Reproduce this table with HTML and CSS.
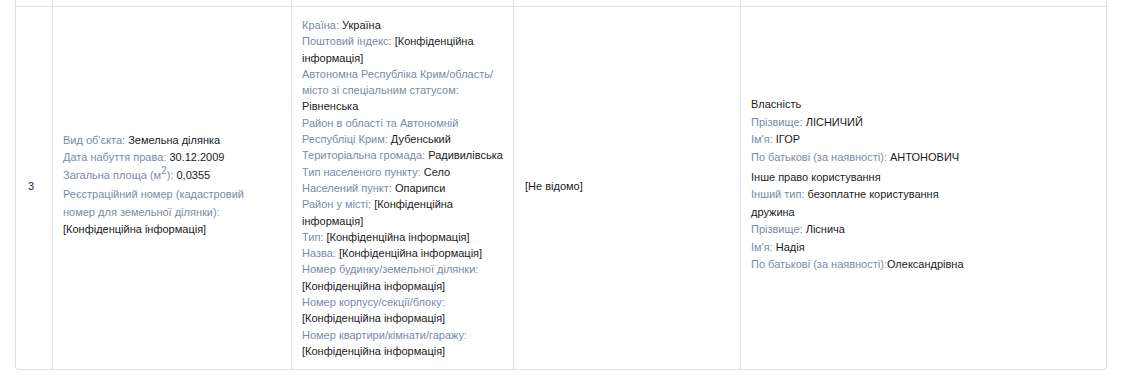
FILE: index.html
```html
<!DOCTYPE html>
<html lang="uk">
<head>
<meta charset="utf-8">
<title>Земельна ділянка</title>
<link rel="stylesheet" href="styles.css">
</head>
<body>
<div class="table">
  <div class="cell top"></div>
  <div class="cell top"></div>
  <div class="cell top"></div>
  <div class="cell top"></div>
  <div class="cell top"></div>

  <div class="cell num">3</div>
  <div class="cell c2">
    <div><span class="lbl">Вид об'єкта:</span> Земельна ділянка</div>
    <div><span class="lbl">Дата набуття права:</span> 30.12.2009</div>
    <div><span class="lbl">Загальна площа (м<sup>2</sup>):</span> 0,0355</div>
    <div class="gap"><span class="lbl">Реєстраційний номер (кадастровий номер для земельної ділянки):</span> [Конфіденційна інформація]</div>
  </div>
  <div class="cell c3">
    <div><span class="lbl">Країна:</span> Україна</div>
    <div><span class="lbl">Поштовий індекс:</span> [Конфіденційна інформація]</div>
    <div><span class="lbl">Автономна Республіка Крим/область/<wbr>місто зі спеціальним статусом:</span> Рівненська</div>
    <div><span class="lbl">Район в області та Автономній Республіці Крим:</span> Дубенський</div>
    <div><span class="lbl">Територіальна громада:</span> Радивилівська</div>
    <div><span class="lbl">Тип населеного пункту:</span> Село</div>
    <div><span class="lbl">Населений пункт:</span> Опарипси</div>
    <div><span class="lbl">Район у місті:</span> [Конфіденційна інформація]</div>
    <div><span class="lbl">Тип:</span> [Конфіденційна інформація]</div>
    <div><span class="lbl">Назва:</span> [Конфіденційна інформація]</div>
    <div><span class="lbl">Номер будинку/земельної ділянки:</span> [Конфіденційна інформація]</div>
    <div><span class="lbl">Номер корпусу/секції/блоку:</span> [Конфіденційна інформація]</div>
    <div><span class="lbl">Номер квартири/кімнати/гаражу:</span> [Конфіденційна інформація]</div>
  </div>
  <div class="cell c4">[Не відомо]</div>
  <div class="cell c5">
    <div class="group">
      <div>Власність</div>
      <div><span class="lbl">Прізвище:</span> ЛІСНИЧИЙ</div>
      <div><span class="lbl">Ім'я:</span> ІГОР</div>
      <div><span class="lbl">По батькові (за наявності):</span> АНТОНОВИЧ</div>
    </div>
    <div class="group next">
      <div>Інше право користування</div>
      <div><span class="lbl">Інший тип:</span> безоплатне користування<br>дружина</div>
      <div><span class="lbl">Прізвище:</span> Ліснича</div>
      <div><span class="lbl">Ім'я:</span> Надія</div>
      <div><span class="lbl">По батькові (за наявності):</span>Олександрівна</div>
    </div>
  </div>
</div>
</body>
</html>
```

FILE: styles.css
```css
html, body {
  margin: 0;
  padding: 0;
  background: #ffffff;
}

body {
  font-family: "Liberation Sans", Arial, sans-serif;
  font-size: 11px;
  color: #1b1b1b;
}

.table {
  margin-left: 15px;
  width: 1092px;
  box-sizing: border-box;
  display: grid;
  grid-template-columns: 36px 238px 221px 226px 365px;
  grid-template-rows: 6px auto;
  column-gap: 1px;
  row-gap: 1px;
  background: #dfe0e6;
  border: 1px solid #dfe0e6;
  border-top: none;
  border-radius: 0 0 4px 4px;
  overflow: hidden;
}

.cell {
  background: #ffffff;
  box-sizing: border-box;
  display: flex;
  flex-direction: column;
  justify-content: center;
}

.cell.top {
  padding: 0;
}

.num {
  padding: 0 0 4px 12px;
  line-height: 17px;
}

.lbl {
  color: #7b8aa6;
}

.c2 {
  padding: 10px 15px 16px 10px;
  line-height: 17.5px;
}

.c2 sup {
  font-size: 10px;
  line-height: 0;
  vertical-align: 5px;
}

.c2 .gap {
  margin-top: 2px;
}

.c3 {
  padding: 10px 10px 10px 10px;
  line-height: 16.3px;
}

.c4 {
  padding: 0 10px 4px 11px;
  line-height: 17px;
}

.c5 {
  padding: 10px 10px 16px 10px;
  line-height: 17.5px;
}

.c5 .next {
  margin-top: 2.5px;
}
```
